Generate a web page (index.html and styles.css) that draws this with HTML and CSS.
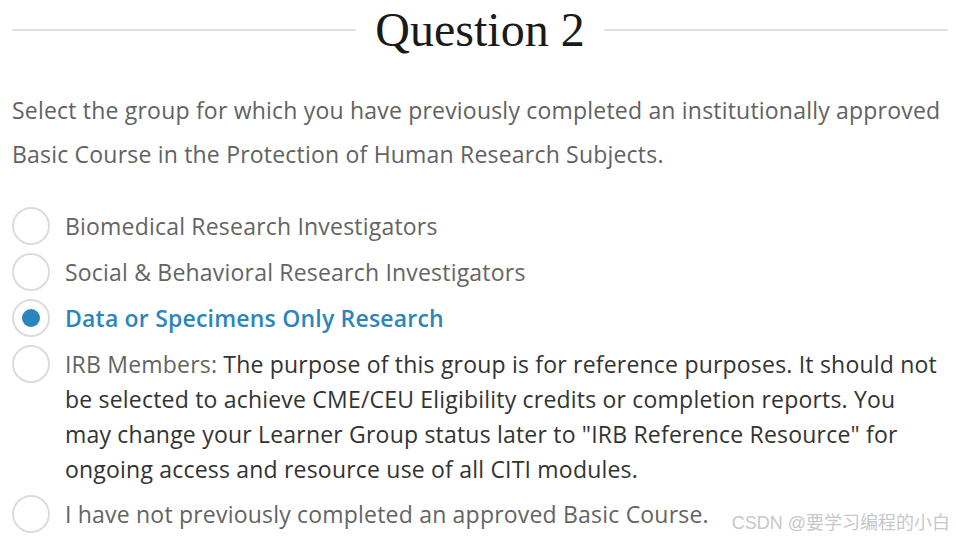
FILE: index.html
```html
<!DOCTYPE html>
<html>
<head>
<meta charset="utf-8">
<link rel="stylesheet" href="styles.css">
</head>
<body>
<div class="page">
  <div class="header">
    <div class="rule"></div>
    <h1 class="title">Question 2</h1>
    <div class="rule"></div>
  </div>
  <p class="prompt">Select the group for which you have previously completed an institutionally approved Basic Course in the Protection of Human Research Subjects.</p>
  <ul class="options">
    <li class="option"><span class="radio"></span><p class="label">Biomedical Research Investigators</p></li>
    <li class="option"><span class="radio"></span><p class="label">Social &amp; Behavioral Research Investigators</p></li>
    <li class="option selected"><span class="radio"></span><p class="label">Data or Specimens Only Research</p></li>
    <li class="option"><span class="radio"></span><p class="label"><span class="name">IRB Members:</span> <span class="desc">The purpose of this group is for reference purposes. It should not be selected to achieve CME/CEU Eligibility credits or completion reports. You may change your Learner Group status later to "IRB Reference Resource" for ongoing access and resource use of all CITI modules.</span></p></li>
    <li class="option"><span class="radio"></span><p class="label">I have not previously completed an approved Basic Course.</p></li>
  </ul>
  <div class="watermark">CSDN @要学习编程的小白</div>
</div>
</body>
</html>
```

FILE: styles.css
```css
html, body {
  margin: 0;
  padding: 0;
  background: #ffffff;
}
.page {
  position: relative;
  width: 956px;
  height: 542px;
  padding: 0 8px 0 12px;
  box-sizing: border-box;
  font-family: "Open Sans", "Noto Sans", sans-serif;
  overflow: hidden;
}
.header {
  display: flex;
  align-items: center;
  gap: 19px;
  height: 60px;
}
.rule {
  flex: 1;
  height: 2px;
  background: #e0e0e0;
}
.title {
  margin: 0;
  font-family: "Liberation Serif", "Times New Roman", serif;
  font-weight: normal;
  font-size: 48px;
  line-height: 60px;
  color: #1a1a1a;
}
.prompt {
  margin: 28px 0 0 0;
  font-size: 23px;
  letter-spacing: 0.2px;
  line-height: 44px;
  color: #626262;
}
.options {
  list-style: none;
  margin: 33px 0 0 0;
  padding: 0 4px 0 0;
}
.option {
  display: flex;
  align-items: flex-start;
  gap: 15px;
  margin-bottom: 10px;
}
.radio {
  flex: none;
  width: 38px;
  height: 38px;
  box-sizing: border-box;
  border: 2px solid #dcdcdc;
  border-radius: 50%;
  display: flex;
  align-items: center;
  justify-content: center;
  margin-top: -2px;
}
.selected .radio::after {
  content: "";
  width: 18px;
  height: 18px;
  border-radius: 50%;
  background: #2a86bb;
}
.label {
  margin: 0;
  font-size: 23px;
  letter-spacing: 0.2px;
  line-height: 35px;
  color: #646464;
}
.selected .label {
  color: #2a86bb;
  font-weight: 600;
}
.desc {
  color: #333333;
}
.watermark {
  position: absolute;
  right: 6px;
  bottom: 8px;
  font-family: "Liberation Sans", "Noto Sans CJK SC", sans-serif;
  font-size: 18px;
  color: #c8c8c8;
}
```
